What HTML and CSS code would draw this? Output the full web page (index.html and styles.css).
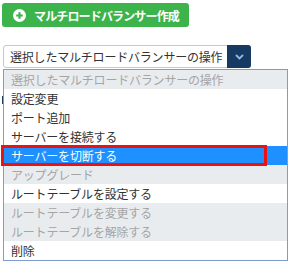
FILE: index.html
```html
<!DOCTYPE html>
<html lang="ja">
<head>
  <meta charset="UTF-8">
  <title>マルチロードバランサー</title>
  <link rel="stylesheet" href="styles.css">
</head>
<body>
  <div class="toolbar">
    <button class="btn-create">
      <svg class="plus-icon" width="13" height="13" viewBox="0 0 13 13">
        <circle cx="6.5" cy="6.5" r="6.5" fill="#fff"/>
        <path d="M6.5 3.2v6.6M3.2 6.5h6.6" stroke="#3cb44b" stroke-width="2.2"/>
      </svg>
      マルチロードバランサー作成
    </button>
  </div>

  <div class="ops">
    <div class="select-box">
      <span class="select-label">選択したマルチロードバランサーの操作</span>
      <span class="select-arrow">
        <svg width="9" height="6" viewBox="0 0 9 6">
          <path d="M1 1l3.5 3.5L8 1" fill="none" stroke="#8fb8ea" stroke-width="1.8"/>
        </svg>
      </span>
    </div>

    <!-- table header behind the open list -->
    <div class="table-head"></div>

    <ul class="dropdown">
      <li class="off">選択したマルチロードバランサーの操作</li>
      <li>設定変更</li>
      <li>ポート追加</li>
      <li>サーバーを接続する</li>
      <li class="active">サーバーを切断する</li>
      <li class="off">アップグレード</li>
      <li>ルートテーブルを設定する</li>
      <li class="off">ルートテーブルを変更する</li>
      <li class="off">ルートテーブルを解除する</li>
      <li>削除</li>
    </ul>
    <div class="mark"></div>
  </div>
</body>
</html>
```

FILE: styles.css
```css
html,
body {
  min-height: 264px;
}

body {
  margin: 0;
  font-family: "Noto Sans CJK JP", "DejaVu Sans", sans-serif;
  font-size: 12px;
  color: #333;
  background: #fff;
}

.toolbar {
  padding: 3px 0 0 2px;
}

.btn-create {
  display: flex;
  align-items: center;
  height: 24px;
  padding: 0 10px 0 11px;
  background: #3cb44b;
  color: #fff;
  font-family: inherit;
  font-size: 12px;
  font-weight: bold;
  letter-spacing: -0.85px;
  border: none;
  border-radius: 3px;
}

.plus-icon {
  margin-right: 8px;
}

.ops {
  position: relative;
  height: 237px;
  box-sizing: border-box;
  padding: 18px 0 0 3px;
}

.select-box {
  display: flex;
  width: 248px;
  height: 23px;
  box-sizing: border-box;
  border: 1px solid #c8c8c8;
  border-radius: 3px;
  background: #fff;
}

.select-label {
  flex: 1;
  padding-left: 6px;
  line-height: 21px;
  letter-spacing: -0.2px;
  white-space: nowrap;
  overflow: hidden;
}

.select-arrow {
  display: flex;
  align-items: center;
  justify-content: center;
  width: 24px;
  margin: -1px -1px -1px 0;
  background: #173a63;
  border-radius: 0 3px 3px 0;
}

.table-head {
  height: 8px;
  margin: 28px 0 0 -1px;
  background: #1d3a5f;
}

.dropdown {
  position: absolute;
  top: 42px;
  left: 3px;
  width: 283px;
  margin: 0;
  padding: 0;
  list-style: none;
  border: 1px solid #7f9dcc;
  background: #fff;
}

.dropdown li {
  height: 19px;
  line-height: 19px;
  padding-left: 7px;
  letter-spacing: -0.2px;
  white-space: nowrap;
}

.dropdown li.off {
  background: #e9ecef;
  color: #a5a5a5;
}

.dropdown li.active {
  background: #1e90ff;
  color: #fff;
}

.mark {
  position: absolute;
  top: 118px;
  left: 1px;
  width: 260px;
  height: 15px;
  border: 3px solid #ee1111;
}
```
